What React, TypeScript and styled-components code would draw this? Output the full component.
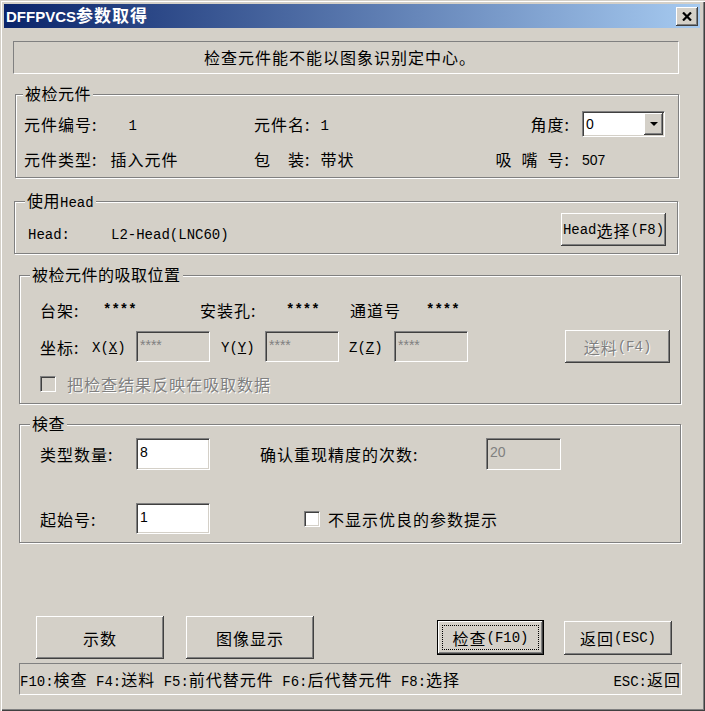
import React from "react";
import styled, { createGlobalStyle, css } from "styled-components";

const CJK = `"Noto Sans CJK SC", "Noto Sans", sans-serif`;
const MONO = `"Liberation Mono", "DejaVu Sans Mono", monospace`;
const SANS = `"Liberation Sans", "Noto Sans CJK SC", sans-serif`;

const Global = createGlobalStyle`
  html, body { margin: 0; padding: 0; background: #d4d0c8; }
  body { font-family: ${CJK}; font-size: 16px; color: #000; }
  *, *::before, *::after { box-sizing: border-box; }
`;

const raised = css`
  background: #d4d0c8;
  box-shadow: inset -1px -1px 0 #404040, inset 1px 1px 0 #fff,
    inset -2px -2px 0 #808080, inset 2px 2px 0 #d4d0c8;
`;

const sunken = css`
  border: 1px solid;
  border-color: #808080 #fff #fff #808080;
  box-shadow: inset 1px 1px 0 #404040, inset -1px -1px 0 #d4d0c8;
`;

const Window = styled.div`
  width: 705px;
  height: 711px;
  background: #d4d0c8;
  padding: 4px 5px 4px 4px;
  box-shadow: inset 1px 1px 0 #d4d0c8, inset 2px 2px 0 #fff,
    inset -1px -1px 0 #404040, inset -2px -2px 0 #808080;
  display: flex;
  flex-direction: column;
  align-items: flex-start;
`;

const TitleBar = styled.div`
  width: 100%;
  height: 24px;
  flex: none;
  display: flex;
  align-items: center;
  justify-content: space-between;
  padding: 0 2px 0 2px;
  background: linear-gradient(to right, #0a246a 0%, #a6caf0 100%);
`;

const TitleText = styled.span`
  color: #fff;
  font-family: ${SANS};
  font-weight: bold;
  font-size: 15px;
  line-height: 24px;
`;

const TitleCJK = styled.span`
  font-family: ${CJK};
  font-size: 17px;
  letter-spacing: 1px;
`;

const CloseButton = styled.div`
  ${raised};
  width: 22px;
  height: 19px;
  display: flex;
  align-items: center;
  justify-content: center;
`;

const Message = styled.div`
  margin: 13px 0 0 9px;
  width: 666px;
  height: 33px;
  border: 1px solid;
  border-color: #808080 #fff #fff #808080;
  padding-right: 12px;
  text-align: center;
  line-height: 31px;
  font-size: 16px;
  letter-spacing: 1px;
`;

const Group = styled.div<{ $top: number; $left: number; $width: number; $height: number }>`
  position: relative;
  flex: none;
  margin: ${(p) => p.$top}px 0 0 ${(p) => p.$left}px;
  width: ${(p) => p.$width}px;
  height: ${(p) => p.$height}px;
  border: 1px solid #808080;
  box-shadow: inset 1px 1px 0 #fff, 1px 1px 0 #fff;
`;

const Legend = styled.span<{ $left: number }>`
  position: absolute;
  top: -11px;
  left: ${(p) => p.$left}px;
  padding: 0 2px;
  background: #d4d0c8;
  font-size: 16px;
  letter-spacing: 0.5px;
  line-height: 18px;
  white-space: nowrap;
`;

const GroupBody = styled.div<{ $pad: string }>`
  padding: ${(p) => p.$pad};
  display: flex;
  flex-direction: column;
`;

const Row = styled.div<{ $h: number; $mt?: number }>`
  display: flex;
  align-items: center;
  height: ${(p) => p.$h}px;
  margin-top: ${(p) => p.$mt ?? 0}px;
`;

const Cell = styled.div<{ $w?: number; $justify?: string }>`
  display: flex;
  align-items: center;
  height: 100%;
  ${(p) => (p.$w ? `width: ${p.$w}px; flex: none;` : `flex: 1;`)}
  justify-content: ${(p) => p.$justify ?? "flex-start"};
`;

const Label = styled.span<{ $w?: number; $right?: boolean; $disabled?: boolean; $ml?: number; $mt?: number }>`
  display: inline-block;
  flex: none;
  ${(p) => (p.$w ? `width: ${p.$w}px;` : "")}
  margin-left: ${(p) => p.$ml ?? 0}px;
  margin-top: ${(p) => p.$mt ?? 0}px;
  text-align: ${(p) => (p.$right ? "right" : "left")};
  font-size: 16px;
  letter-spacing: 1px;
  line-height: 20px;
  white-space: nowrap;
  color: ${(p) => (p.$disabled ? "#808080" : "#000")};
  text-shadow: ${(p) => (p.$disabled ? "1px 1px 0 #fff" : "none")};
`;

const Lat = styled.span<{ $size?: number; $bold?: boolean }>`
  font-family: ${MONO};
  font-size: ${(p) => p.$size ?? 14}px;
  font-weight: ${(p) => (p.$bold ? "bold" : "normal")};
  letter-spacing: 0;
`;

const Num = styled.span`
  font-family: ${SANS};
  font-size: 14px;
  letter-spacing: 0;
`;

const Combo = styled.div`
  ${sunken};
  width: 83px;
  height: 26px;
  background: #fff;
  display: flex;
  align-items: stretch;
  margin-left: 12px;
  padding: 1px;
`;

const ComboText = styled.span`
  flex: 1;
  font-family: ${SANS};
  font-size: 14px;
  line-height: 22px;
  padding-left: 2px;
`;

const ComboButton = styled.div`
  ${raised};
  width: 19px;
  display: flex;
  align-items: center;
  justify-content: center;
`;

const Field = styled.div<{ $w: number; $h: number; $disabled?: boolean }>`
  ${sunken};
  flex: none;
  width: ${(p) => p.$w}px;
  height: ${(p) => p.$h}px;
  background: ${(p) => (p.$disabled ? "#d4d0c8" : "#fff")};
  color: ${(p) => (p.$disabled ? "#808080" : "#000")};
  font-family: ${SANS};
  font-size: 14px;
  line-height: 18px;
  padding: 4px 3px;
`;

const Button = styled.div<{ $w: number; $h: number; $disabled?: boolean; $default?: boolean; $ml?: number }>`
  position: relative;
  flex: none;
  width: ${(p) => p.$w}px;
  height: ${(p) => p.$h}px;
  margin-left: ${(p) => p.$ml ?? 0}px;
  display: flex;
  align-items: center;
  justify-content: center;
  font-size: 16px;
  letter-spacing: 1px;
  white-space: nowrap;
  color: ${(p) => (p.$disabled ? "#808080" : "#000")};
  text-shadow: ${(p) => (p.$disabled ? "1px 1px 0 #fff" : "none")};
  ${raised};
  ${(p) =>
    p.$default &&
    css`
      border: 1px solid #000;
      &::after {
        content: "";
        position: absolute;
        inset: 4px;
        border: 1px dotted #000;
      }
    `}
`;

const Check = styled.div<{ $disabled?: boolean }>`
  ${sunken};
  flex: none;
  width: 16px;
  height: 16px;
  background: ${(p) => (p.$disabled ? "#d4d0c8" : "#fff")};
`;

const ButtonRow = styled.div`
  display: flex;
  align-items: center;
  height: 43px;
  margin: 73px 0 0 32px;
`;

const StatusBar = styled.div`
  margin: 4px 0 0 15px;
  width: 663px;
  height: 32px;
  flex: none;
  border: 1px solid;
  border-color: #808080 #fff #fff #808080;
  display: flex;
  align-items: center;
  justify-content: space-between;
  font-size: 16px;
  letter-spacing: 1px;
  white-space: nowrap;
`;

const Sp = styled.span<{ $w: number }>`
  display: inline-block;
  flex: none;
  width: ${(p) => p.$w}px;
`;

export default function App() {
  return (
    <>
      <Global />
      <Window>
        <TitleBar>
          <TitleText>
            DFFPVCS<TitleCJK>参数取得</TitleCJK>
          </TitleText>
          <CloseButton>
            <svg width="10" height="9" viewBox="0 0 10 9">
              <path d="M1 0.5 L9 8.5 M9 0.5 L1 8.5" stroke="#000" strokeWidth="2.2" />
            </svg>
          </CloseButton>
        </TitleBar>

        <Message>检查元件能不能以图象识别定中心。</Message>

        <Group $top={20} $left={11} $width={664} $height={84}>
          <Legend $left={7}>被检元件</Legend>
          <GroupBody $pad="16px 13px 0 8px">
            <Row $h={26}>
              <Cell $w={230}>
                <Label>元件编号:</Label>
                <Label $ml={31}><Lat>1</Lat></Label>
              </Cell>
              <Cell>
                <Label>元件名:</Label>
                <Label $ml={10}><Lat>1</Lat></Label>
              </Cell>
              <Cell $w={171}>
                <Label $w={76} $right>角度:</Label>
                <Combo>
                  <ComboText>0</ComboText>
                  <ComboButton>
                    <svg width="8" height="4" viewBox="0 0 8 4">
                      <path d="M0 0 H8 L4 4 Z" fill="#000" />
                    </svg>
                  </ComboButton>
                </Combo>
              </Cell>
            </Row>
            <Row $h={20} $mt={12}>
              <Cell $w={230}>
                <Label>元件类型:</Label>
                <Label $ml={13}>插入元件</Label>
              </Cell>
              <Cell>
                <Label>包　装:</Label>
                <Label $ml={10}>带状</Label>
              </Cell>
              <Cell $w={171}>
                <Label $w={76} $right>吸&ensp;嘴&ensp;号:</Label>
                <Label $ml={12}><Num>507</Num></Label>
              </Cell>
            </Row>
          </GroupBody>
        </Group>

        <Group $top={23} $left={10} $width={664} $height={53}>
          <Legend $left={10}>使用<Lat $size={14}>Head</Lat></Legend>
          <GroupBody $pad="11px 11px 0 13px">
            <Row $h={33}>
              <Cell>
                <Label $mt={8}>
                  <Lat>Head:</Lat>
                </Label>
                <Label $ml={41} $mt={8}>
                  <Lat>L2-Head(LNC60)</Lat>
                </Label>
              </Cell>
              <Button $w={105} $h={33}>
                <Lat>Head</Lat>选择<Lat>(F8)</Lat>
              </Button>
            </Row>
          </GroupBody>
        </Group>

        <Group $top={21} $left={15} $width={662} $height={129}>
          <Legend $left={10}>被检元件的吸取位置</Legend>
          <GroupBody $pad="24px 10px 0 20px">
            <Row $h={20}>
              <Cell $w={160}>
                <Label $w={63}>台架:</Label>
                <Lat $bold>****</Lat>
              </Cell>
              <Cell $w={150}>
                <Label $w={86}>安装孔:</Label>
                <Lat $bold>****</Lat>
              </Cell>
              <Cell>
                <Label $w={76}>通道号</Label>
                <Lat $bold>****</Lat>
              </Cell>
            </Row>
            <Row $h={33} $mt={10}>
              <Label $w={52}>坐标:</Label>
              <Label $w={44}>
                <Lat>X(<u>X</u>)</Lat>
              </Label>
              <Field $w={74} $h={31} $disabled>****</Field>
              <Sp $w={11} />
              <Label $w={44}>
                <Lat>Y(<u>Y</u>)</Lat>
              </Label>
              <Field $w={74} $h={31} $disabled>****</Field>
              <Sp $w={10} />
              <Label $w={45}>
                <Lat>Z(<u>Z</u>)</Lat>
              </Label>
              <Field $w={74} $h={31} $disabled>****</Field>
              <Button $w={105} $h={33} $ml={97} $disabled>
                送料<Lat>(F4)</Lat>
              </Button>
            </Row>
            <Row $h={20} $mt={11}>
              <Check $disabled />
              <Label $disabled $ml={11}>把检查结果反映在吸取数据</Label>
            </Row>
          </GroupBody>
        </Group>

        <Group $top={20} $left={15} $width={662} $height={119}>
          <Legend $left={10}>検查</Legend>
          <GroupBody $pad="13px 0 0 20px">
            <Row $h={32}>
              <Label $w={96}>类型数量:</Label>
              <Field $w={74} $h={32}>8</Field>
              <Sp $w={50} />
              <Label $w={226}>确认重现精度的次数:</Label>
              <Field $w={75} $h={32} $disabled>20</Field>
            </Row>
            <Row $h={31} $mt={33}>
              <Label $w={96}>起始号:</Label>
              <Field $w={74} $h={31}>1</Field>
              <Sp $w={94} />
              <Check />
              <Label $ml={8}>不显示优良的参数提示</Label>
            </Row>
          </GroupBody>
        </Group>

        <ButtonRow>
          <Button $w={128} $h={43}>示数</Button>
          <Button $w={128} $h={43} $ml={22}>图像显示</Button>
          <Button $w={107} $h={35} $ml={123} $default>
            检查<Lat>(F10)</Lat>
          </Button>
          <Button $w={108} $h={34} $ml={20}>
            返回<Lat>(ESC)</Lat>
          </Button>
        </ButtonRow>

        <StatusBar>
          <span>
            <Lat>F10:</Lat>検查<Lat> F4:</Lat>送料<Lat> F5:</Lat>前代替元件
            <Lat> F6:</Lat>后代替元件<Lat> F8:</Lat>选择
          </span>
          <span>
            <Lat>ESC:</Lat>返回
          </span>
        </StatusBar>
      </Window>
    </>
  );
}
